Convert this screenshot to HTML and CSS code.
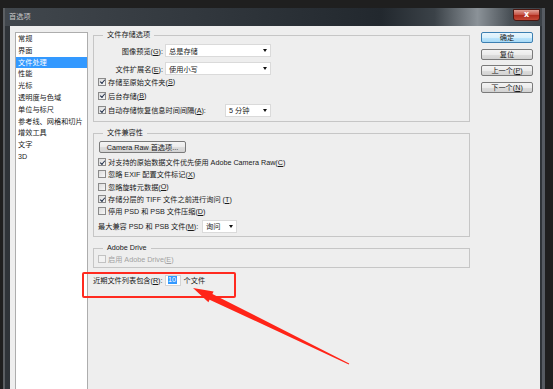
FILE: index.html
```html
<!DOCTYPE html>
<html lang="zh-CN">
<head>
    <meta charset="UTF-8">
    <meta name="viewport" content="width=device-width, initial-scale=1.0">
    <title>首选项</title>
    <link rel="stylesheet" href="styles.css">
</head>
<body>
    <div class="dialog">
        <div class="titlebar">
            <span class="title">首选项</span>
            <span class="close">x</span>
        </div>

        <div class="panel">
            <ul class="nav">
                <li>常规</li>
                <li>界面</li>
                <li class="active">文件处理</li>
                <li>性能</li>
                <li>光标</li>
                <li>透明度与色域</li>
                <li>单位与标尺</li>
                <li>参考线、网格和切片</li>
                <li>增效工具</li>
                <li>文字</li>
                <li>3D</li>
            </ul>

            <div class="main">
                <fieldset class="group g-save">
                    <legend>文件存储选项</legend>
                    <div class="row field first">
                        <span class="lbl">图像预览(<u>G</u>):</span>
                        <div class="select wide"><span>总是存储</span><i class="caret"></i></div>
                    </div>
                    <div class="row field second">
                        <span class="lbl">文件扩展名(<u>E</u>):</span>
                        <div class="select wide"><span>使用小写</span><i class="caret"></i></div>
                    </div>
                    <div class="row check">
                        <span class="cb on"></span>存储至原始文件夹(<u>S</u>)
                    </div>
                    <div class="row check">
                        <span class="cb on"></span>后台存储(<u>B</u>)
                    </div>
                    <div class="row check last">
                        <span class="cb on"></span>自动存储恢复信息时间间隔(<u>A</u>):
                        <div class="select mins"><span>5 分钟</span><i class="caret"></i></div>
                    </div>
                </fieldset>

                <fieldset class="group g-compat">
                    <legend>文件兼容性</legend>
                    <button class="btn raw">Camera Raw 首选项...</button>
                    <div class="checks">
                        <div class="row check"><span class="cb on"></span>对支持的原始数据文件优先使用 Adobe Camera Raw(<u>C</u>)</div>
                        <div class="row check"><span class="cb"></span>忽略 EXIF 配置文件标记(<u>X</u>)</div>
                        <div class="row check"><span class="cb"></span>忽略旋转元数据(<u>O</u>)</div>
                        <div class="row check"><span class="cb on"></span>存储分层的 TIFF 文件之前进行询问 (<u>T</u>)</div>
                        <div class="row check"><span class="cb"></span>停用 PSD 和 PSB 文件压缩(<u>D</u>)</div>
                    </div>
                    <div class="row maxcompat">
                        <span class="lbl-m">最大兼容 PSD 和 PSB 文件(<u>M</u>):</span>
                        <div class="select ask"><span>询问</span><i class="caret"></i></div>
                    </div>
                </fieldset>

                <fieldset class="group g-drive">
                    <legend>Adobe Drive</legend>
                    <div class="row check disabled"><span class="cb"></span>启用 Adobe Drive(<u>E</u>)</div>
                </fieldset>

                <div class="row recent">
                    <span>近期文件列表包含(<u>R</u>):</span>
                    <span class="num"><span class="sel">10</span></span>
                    <span>个文件</span>
                </div>
            </div>

            <div class="buttons">
                <button class="btn default">确定</button>
                <button class="btn">复位</button>
                <button class="btn">上一个(<u>P</u>)</button>
                <button class="btn">下一个(<u>N</u>)</button>
            </div>
        </div>
    </div>

    <!-- annotation drawn over the screenshot -->
    <div class="callout"></div>
    <svg class="arrow" width="553" height="389" viewBox="0 0 553 389">
        <polygon points="193,288 213.6,291.4 212.4,293.9 349.2,363.6 348.8,364.4 209.6,299.7 208.4,302.2" fill="#ff2418"/>
    </svg>
</body>
</html>
```

FILE: styles.css
```css
* {
    margin: 0;
    padding: 0;
    box-sizing: border-box;
}

body {
    background: #1f1f1f;
    width: 553px;
    height: 389px;
    overflow: hidden;
    font-family: 'Liberation Sans', 'Noto Sans CJK SC', sans-serif;
    font-size: 7.2px;
    color: #1a1a1a;
    padding-top: 8px;
}

u {
    text-decoration: underline;
    text-underline-offset: 1px;
}

.dialog {
    margin-left: 3px;
    width: 542px;
    height: 381px;
    display: flex;
    flex-direction: column;
    background: #2f3439;
    border-left: 2px solid #5b5f63;
    border-right: 3px solid #565b62;
}

/* title bar */
.titlebar {
    height: 18px;
    display: flex;
    align-items: flex-start;
    justify-content: space-between;
    padding: 0 2px 0 4px;
    background: linear-gradient(to right, #41474d 0%, #30363c 40%, #22282e 70%, #3b4248 80%, #8b9298 88%, #4a5157 94%, #3a4046 100%);
}

.title {
    line-height: 17px;
    color: #c9c9c9;
}

.close {
    margin-top: 1px;
    width: 27px;
    height: 12px;
    border: 1px solid #4a1812;
    border-radius: 0 0 3px 3px;
    background: linear-gradient(#e0a196 0%, #c9584a 45%, #b02e1f 55%, #c44a38 100%);
    color: #fff;
    font-family: 'DejaVu Sans', sans-serif;
    font-size: 8px;
    font-weight: bold;
    line-height: 9px;
    text-align: center;
}

/* body */
.panel {
    flex: 1;
    display: flex;
    align-items: flex-start;
    margin: 0 2px 0 5px;
    padding: 5px 7px 0 5px;
    background: #eeeeee;
    overflow: hidden;
}

.nav {
    list-style: none;
    width: 73px;
    height: 400px;
    margin: 1px 5px 0 0;
    background: #fff;
    border: 1px solid #adadad;
}

.nav li {
    height: 11.8px;
    line-height: 11.8px;
    padding-left: 2px;
    white-space: nowrap;
}

.nav li.active {
    background: #3399ff;
    color: #fff;
}

.main {
    width: 377px;
    margin-right: 11px;
    display: flex;
    flex-direction: column;
}

/* group boxes */
.group {
    margin: 0;
    min-width: 0;
    padding: 0 3px;
    border: 1px solid #c6c6c6;
}

.group legend {
    margin-left: 6px;
    padding: 0 4px;
    line-height: 8px;
    color: #1a1a1a;
}

.g-save {
    padding-bottom: 4px;
}

.g-compat {
    margin-top: 7px;
    padding-bottom: 3px;
}

.g-drive {
    margin-top: 7px;
    padding-bottom: 2px;
}

.row {
    display: flex;
    align-items: center;
    white-space: nowrap;
}

.field {
    height: 13px;
}

.field.first,
.field.second {
    margin-top: 5px;
}

.lbl {
    width: 66px;
    text-align: right;
    margin-right: 2px;
}

.check {
    height: 13px;
}

.check + .check {
    margin-top: 1px;
}

.check.last {
    width: 174px;
    height: 14px;
}

.cb {
    width: 8px;
    height: 8px;
    margin: 0 2px 0 1px;
    border: 1px solid #8a8a8a;
    background: linear-gradient(135deg, #dcdcdc, #f7f7f7);
    display: flex;
    align-items: center;
    justify-content: center;
    flex-shrink: 0;
}

.cb.on::after {
    content: "";
    width: 2px;
    height: 4px;
    border: solid #26344f;
    border-width: 0 1.2px 1.2px 0;
    transform: translate(0, -0.5px) rotate(40deg);
}

/* dropdowns */
.select {
    height: 13px;
    display: flex;
    align-items: center;
    padding: 0 3px 0 3px;
    background: #fff;
    border: 1px solid #dadada;
}

.select .caret {
    margin-left: auto;
    width: 0;
    height: 0;
    border-left: 2.5px solid transparent;
    border-right: 2.5px solid transparent;
    border-top: 3px solid #111;
}

.select.wide {
    width: 106px;
}

.select.mins {
    width: 46px;
    margin-left: auto;
}

.select.ask {
    width: 35px;
}

/* compatibility group */
.btn {
    font-family: inherit;
    font-size: 7.2px;
    color: #1a1a1a;
    height: 11px;
    border: 1px solid #7a7a7a;
    border-radius: 2px;
    background: linear-gradient(#f4f4f4 0%, #ebebeb 50%, #dddddd 51%, #d2d2d2 100%);
    line-height: 9px;
}

.btn.raw {
    width: 87px;
    height: 12px;
    margin: 4px 0 0 2px;
}

.checks {
    margin-top: 3px;
}

.checks .check {
    height: 12.3px;
}

.checks .check + .check {
    margin-top: 0;
}

.maxcompat {
    height: 14px;
    margin-top: 2px;
}

.lbl-m {
    width: 104px;
    margin-left: 1px;
}

.g-drive .check {
    height: 12px;
    margin-top: 1px;
}

.disabled {
    color: #a2a2a2;
}

.disabled .cb {
    border-color: #c2c2c2;
    background: #f2f2f2;
}

/* recent files */
.recent {
    height: 14px;
    margin-top: 5px;
}

.num {
    width: 16px;
    height: 11px;
    margin: 0 3px 0 2px;
    padding-left: 2px;
    display: flex;
    align-items: center;
    background: #fff;
    border: 1px solid #d4d4d4;
    flex-shrink: 0;
}

.num .sel {
    display: block;
    padding: 0 0.5px;
    background: #3399ff;
    color: #fff;
    line-height: 8px;
}

/* right buttons */
.buttons {
    width: 52px;
    margin-top: 1px;
    display: flex;
    flex-direction: column;
    gap: 5.7px;
}

.buttons .btn {
    width: 52px;
}

.btn.default {
    border-color: #3c7fb1;
    background: linear-gradient(#eaf6fd 0%, #d9f0fc 50%, #bee6fd 51%, #a7d9f5 100%);
}

/* annotation overlay */
.callout {
    position: absolute;
    left: 82px;
    top: 272px;
    width: 154px;
    height: 26px;
    border: 2px solid #ff2a1f;
    border-radius: 2px;
}

.arrow {
    position: absolute;
    left: 0;
    top: 0;
    pointer-events: none;
}
```
